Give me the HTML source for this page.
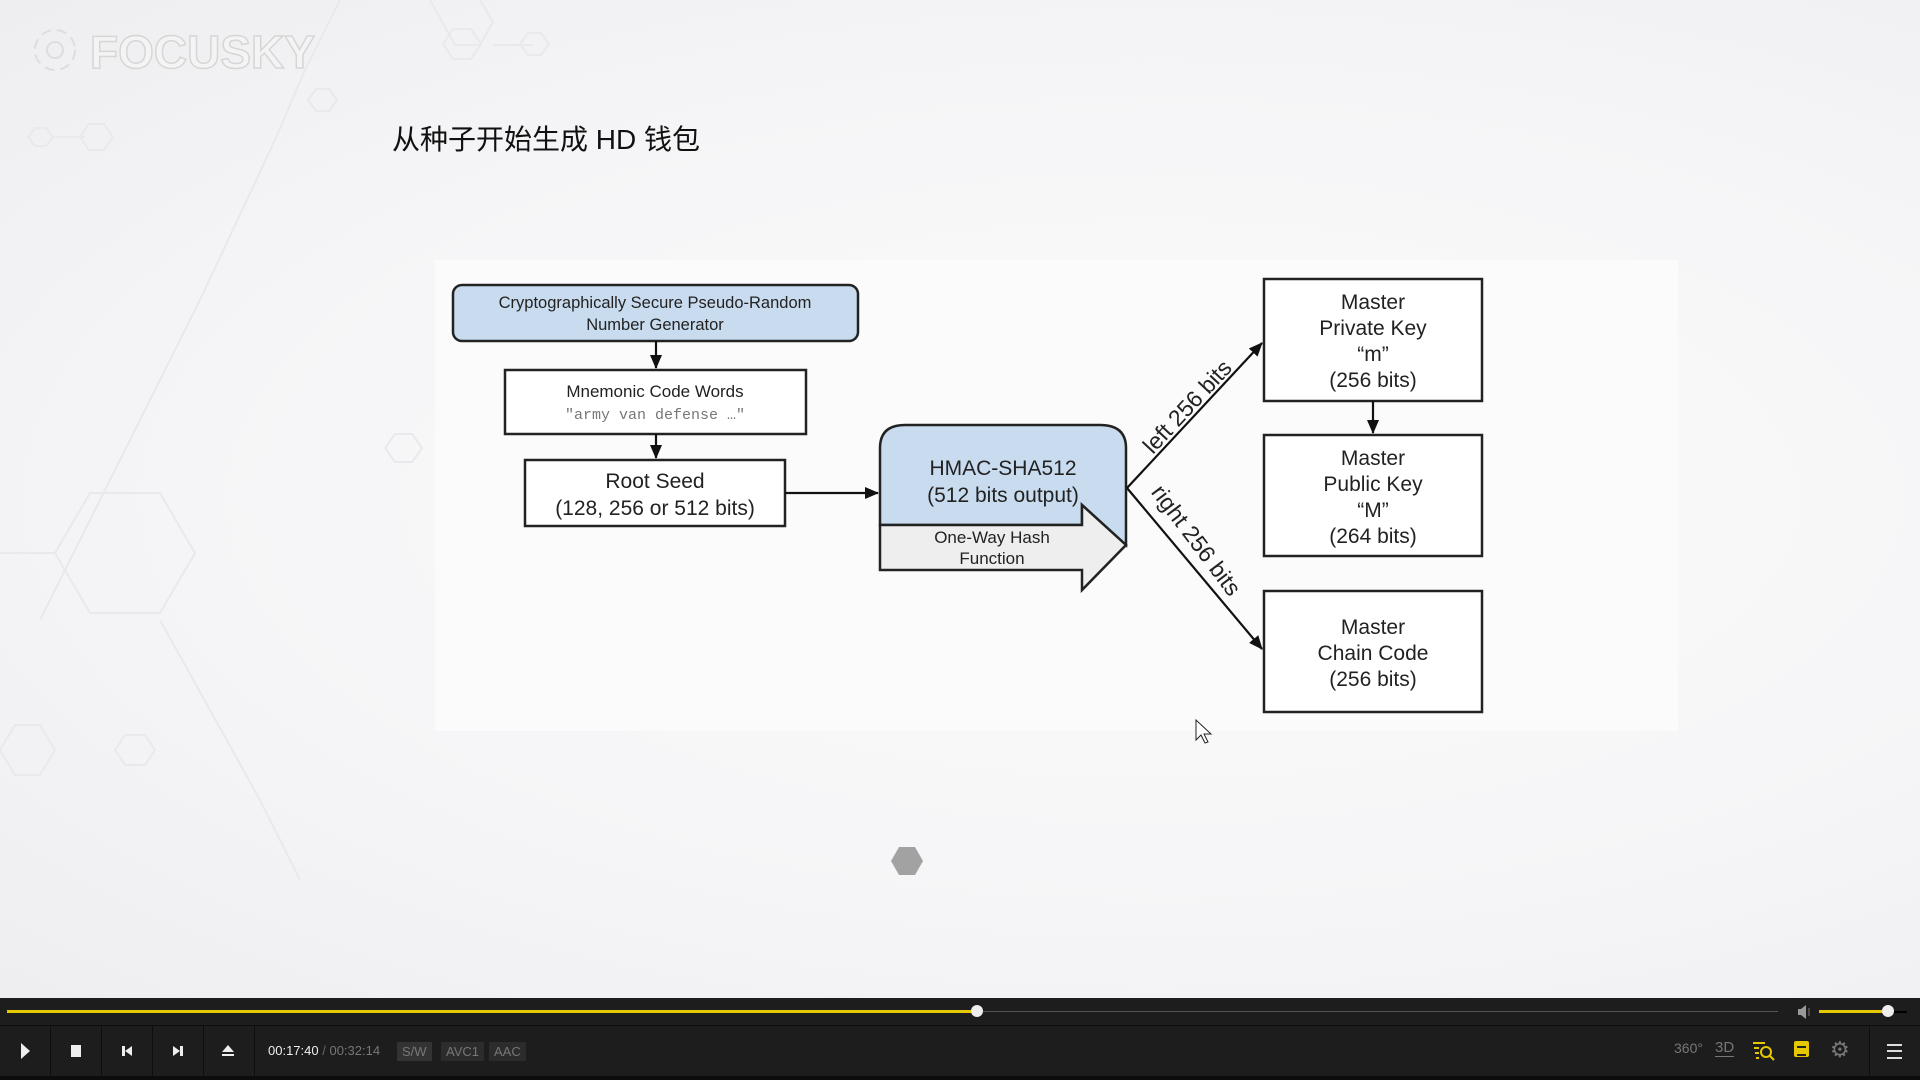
<!DOCTYPE html>
<html><head><meta charset="utf-8"><style>
html,body{margin:0;padding:0;width:1920px;height:1080px;overflow:hidden;background:#f6f6f8;font-family:"Liberation Sans","Noto Sans CJK SC",sans-serif}
.bg{position:absolute;left:0;top:0;width:1920px;height:998px;background:radial-gradient(ellipse at 60% 50%,#fcfcfc 0%,#f5f5f7 60%,#eeeef0 100%)}
.title{position:absolute;left:392px;top:118px;font-size:28px;color:#111;font-family:"Liberation Sans","Noto Sans CJK SC",sans-serif}
.bar{position:absolute;left:0;top:998px;width:1920px;height:82px;background:#1d1d1d}
.btn{position:absolute;top:1026px;height:50px;border-right:1px solid #0e0e0e}
.tag{position:absolute;top:1042px;height:19px;background:#2c2c2c;color:#777;font-size:13px;line-height:19px;padding:0 5px}
</style></head><body>
<div class="bg"></div>
<svg width="1920" height="998" style="position:absolute;left:0;top:0">
<g fill="none" stroke="#e9e9ec" stroke-width="2">
<path d="M340 0 L305 70 L275 140 L200 300 L120 460 L40 620"/>
<path d="M430 0 L455 45 L480 45 L493 22 L480 0"/>
<path d="M493 45 L533 45"/>
<path d="M443 44 l10 -15 h18 l10 15 l-10 15 h-18z"/>
<path d="M520 44 l8 -11 h13 l8 11 l-8 11 h-13z"/>
<path d="M308 100 l8 -11 h13 l8 11 l-8 11 h-13z"/>
<path d="M28 137 l7 -9 h11 l7 9 l-7 9 h-11z"/>
<path d="M55 137 h30"/>
<path d="M80 137 l9 -13 h15 l9 13 l-9 13 h-15z"/>
<path d="M55 553 l35 -60 h70 l35 60 l-35 60 h-70z"/>
<path d="M0 553 h55"/>
<path d="M385 448 l10 -14 h17 l10 14 l-10 14 h-17z"/>
<path d="M0 750 l15 -25 h25 l15 25 l-15 25 h-25z"/>
<path d="M115 750 l10 -15 h20 l10 15 l-10 15 h-20z"/>
<path d="M160 620 L260 800 L300 880"/>
</g>
</svg>
<svg width="330" height="60" style="position:absolute;left:25px;top:22px">
<g fill="none" stroke="#ddd" stroke-width="2">
<circle cx="30" cy="28" r="20" stroke-dasharray="10 6"/>
<circle cx="30" cy="28" r="8"/>
</g>
<text x="65" y="46" font-family="Liberation Sans" font-weight="bold" font-size="46" fill="#f4f4f4" stroke="#d6d6d6" stroke-width="1.5">FOCUSKY</text>
</svg>
<div class="title">从种子开始生成 HD 钱包</div>
<div style="position:absolute;left:435px;top:260px;width:1243px;height:471px;background:#fbfbfb"></div>
<svg width="1920" height="998" style="position:absolute;left:0;top:0;font-family:'Liberation Sans',sans-serif">
<defs><marker id="b" markerWidth="14" markerHeight="12" refX="13" refY="6" orient="auto" markerUnits="userSpaceOnUse"><path d="M0 0 L14 6 L0 12z" fill="#111"/></marker></defs>
<g stroke="#222" stroke-width="2.5" fill="none">
<rect x="453" y="285" width="405" height="56" rx="9" fill="#c9dcef"/>
<rect x="505" y="370" width="301" height="64" fill="#fff"/>
<rect x="525" y="460" width="260" height="66" fill="#fff"/>
<path d="M880 525 V448 Q880 425 905 425 H1100 Q1126 425 1126 448 V545 L1082 505 V525 Z" fill="#c9dcef"/>
<path d="M880 525 H1082 V505 L1126 545 L1082 590 V570 H880 Z" fill="#eeeeee"/>
<rect x="1264" y="279" width="218" height="122" fill="#fff"/>
<rect x="1264" y="435" width="218" height="121" fill="#fff"/>
<rect x="1264" y="591" width="218" height="121" fill="#fff"/>
</g>
<g stroke="#111" stroke-width="2.2" fill="none">
<path d="M656 341 V368" marker-end="url(#b)"/>
<path d="M656 434 V458" marker-end="url(#b)"/>
<path d="M785 493 H878" marker-end="url(#b)"/>
<path d="M1373 401 V433" marker-end="url(#b)"/>
<path d="M1127 488 L1262 343" marker-end="url(#b)"/>
<path d="M1127 488 L1262 649" marker-end="url(#b)"/>
</g>
<g fill="#222" text-anchor="middle">
<text x="655" y="308" font-size="16.5">Cryptographically Secure Pseudo-Random</text>
<text x="655" y="330" font-size="16.5">Number Generator</text>
<text x="655" y="397" font-size="17">Mnemonic Code Words</text>
<text x="655" y="419" font-size="15" fill="#777" font-family="Liberation Mono">"army van defense …"</text>
<text x="655" y="488" font-size="21">Root Seed</text>
<text x="655" y="515" font-size="21">(128, 256 or 512 bits)</text>
<text x="1003" y="475" font-size="21">HMAC-SHA512</text>
<text x="1003" y="502" font-size="21">(512 bits output)</text>
<text x="992" y="543" font-size="17">One-Way Hash</text>
<text x="992" y="564" font-size="17">Function</text>
<text x="1373" y="309" font-size="21">Master</text>
<text x="1373" y="335" font-size="21">Private Key</text>
<text x="1373" y="361" font-size="21">“m”</text>
<text x="1373" y="387" font-size="21">(256 bits)</text>
<text x="1373" y="465" font-size="21">Master</text>
<text x="1373" y="491" font-size="21">Public Key</text>
<text x="1373" y="517" font-size="21">“M”</text>
<text x="1373" y="543" font-size="21">(264 bits)</text>
<text x="1373" y="634" font-size="21">Master</text>
<text x="1373" y="660" font-size="21">Chain Code</text>
<text x="1373" y="686" font-size="21">(256 bits)</text>
<text transform="translate(1193 412) rotate(-47)" font-size="23">left 256 bits</text>
<text transform="translate(1190 545) rotate(53)" font-size="23">right 256 bits</text>
</g>
<path d="M891 861 l8 -14 h16 l8 14 l-8 14 h-16z" fill="#a2a2a2"/>
<path d="M1196 720 v20 l5 -5 l4 8 l3 -1 l-4 -8 h7z" fill="#fff" stroke="#222" stroke-width="1"/>
</svg>
<div class="bar"></div>
<div style="position:absolute;left:7px;top:1010px;width:970px;height:3px;background:#e6c800"></div>
<div style="position:absolute;left:977px;top:1011px;width:801px;height:1px;background:#555"></div>
<div style="position:absolute;left:971px;top:1005px;width:12px;height:12px;border-radius:50%;background:#eee"></div>
<div style="position:absolute;left:0;top:1025px;width:1920px;height:1px;background:#0e0e0e"></div>
<div style="position:absolute;left:0;top:1076px;width:1920px;height:4px;background:#0c0c0c"></div>
<svg width="16" height="14" style="position:absolute;left:1797px;top:1005px"><path d="M1 4h3l5-4v14l-5-4h-3z" fill="#999"/><path d="M12 3v8" stroke="#777"/></svg>
<div style="position:absolute;left:1819px;top:1010px;width:69px;height:3px;background:#e6c800"></div>
<div style="position:absolute;left:1888px;top:1011px;width:19px;height:2px;background:#000"></div>
<div style="position:absolute;left:1882px;top:1005px;width:12px;height:12px;border-radius:50%;background:#eee"></div>
<div class="btn" style="left:0;width:50px"></div>
<div class="btn" style="left:51px;width:50px"></div>
<div class="btn" style="left:102px;width:50px"></div>
<div class="btn" style="left:153px;width:50px"></div>
<div class="btn" style="left:204px;width:50px"></div>
<svg width="260" height="50" style="position:absolute;left:0;top:1026px" fill="#eee">
<path d="M21 17 L30 25 L21 33z"/>
<rect x="71" y="19" width="10" height="12"/>
<rect x="122" y="20" width="3" height="10"/><path d="M132 20 L125 25 L132 30z"/>
<path d="M173 20 L180 25 L173 30z"/><rect x="180" y="20" width="3" height="10"/>
<path d="M228 19 L234 26 H222z"/><rect x="222" y="28" width="12" height="2"/>
</svg>
<div style="position:absolute;left:268px;top:1043px;font-size:13px;color:#eee">00:17:40 <span style="color:#666">/</span> <span style="color:#777">00:32:14</span></div>
<div class="tag" style="left:397px;background:#333">S/W</div>
<div class="tag" style="left:441px">AVC1</div>
<div class="tag" style="left:489px">AAC</div>
<div style="position:absolute;left:1869px;top:1026px;width:1px;height:50px;background:#0e0e0e"></div>
<div style="position:absolute;left:1674px;top:1040px;font-size:14px;color:#777">360°</div>
<div style="position:absolute;left:1715px;top:1040px;font-size:15px;color:#777;border-bottom:1px solid #777;line-height:16px">3D</div>
<svg width="24" height="20" style="position:absolute;left:1752px;top:1041px" fill="none" stroke="#e6c800" stroke-width="2"><path d="M1 2h12M2 7h5M3 12h4M4 17h3"/><circle cx="14" cy="11" r="5"/><path d="M18 15l4 4"/></svg>
<div style="position:absolute;left:1794px;top:1041px;width:15px;height:16px;background:#e6c800;border-radius:2px"><div style="margin:5px 3px;height:6px;border-top:2px solid #222;border-bottom:2px solid #222"></div></div>
<div style="position:absolute;left:1830px;top:1038px;font-size:22px;color:#777;line-height:24px">⚙</div>
<div style="position:absolute;left:1887px;top:1044px;width:15px;height:11px;border-top:2px solid #ddd;border-bottom:2px solid #ddd"><div style="margin-top:4px;height:2px;background:#ddd"></div></div>
</body></html>
